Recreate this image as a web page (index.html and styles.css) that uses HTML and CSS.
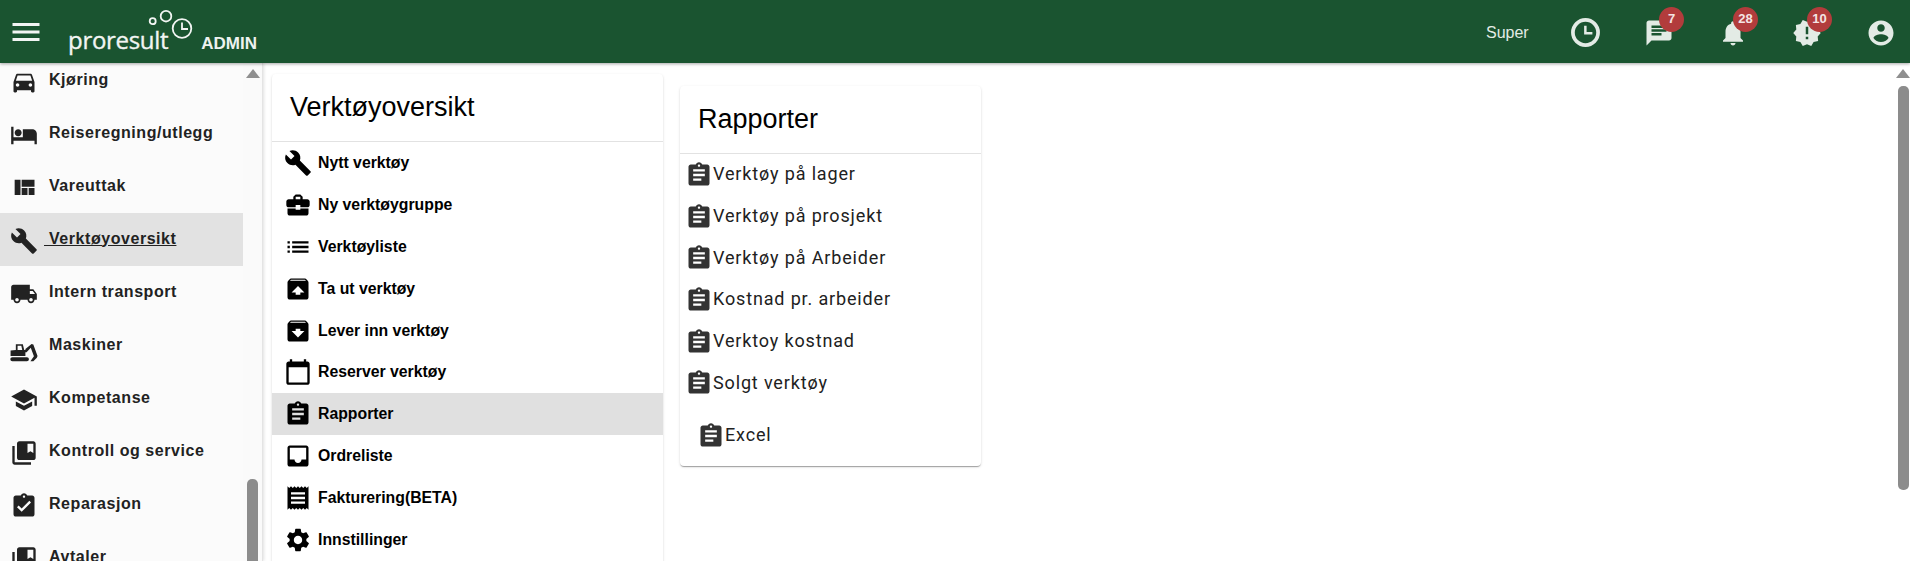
FILE: index.html
```html
<!DOCTYPE html>
<html lang="no">
<head>
<meta charset="utf-8">
<title>Verktøyoversikt</title>
<link rel="stylesheet" href="styles.css">
</head>
<body>
<svg class="sprite" xmlns="http://www.w3.org/2000/svg">
<symbol id="i-car" viewBox="0 0 24 24"><path d="M18.92 6.01C18.72 5.42 18.16 5 17.5 5h-11c-.66 0-1.21.42-1.42 1.01L3 12v8c0 .55.45 1 1 1h1c.55 0 1-.45 1-1v-1h12v1c0 .55.45 1 1 1h1c.55 0 1-.45 1-1v-8l-2.08-5.99zM6.5 16c-.83 0-1.5-.67-1.5-1.5S5.67 13 6.5 13s1.5.67 1.5 1.5S7.33 16 6.5 16zm11 0c-.83 0-1.5-.67-1.5-1.5s.67-1.5 1.5-1.5 1.5.67 1.5 1.5-.67 1.5-1.5 1.5zM5 11l1.5-4.5h11L19 11H5z"/></symbol>
<symbol id="i-hotel" viewBox="0 0 24 24"><path d="M7 13c1.66 0 3-1.34 3-3S8.66 7 7 7s-3 1.34-3 3 1.34 3 3 3zm12-6h-8v7H3V5H1v15h2v-3h18v3h2v-9c0-2.21-1.79-4-4-4z"/></symbol>
<symbol id="i-quilt" viewBox="0 0 24 24"><path d="M10 18h5v-6h-5v6zm-6 0h5V5H4v13zm12 0h5v-6h-5v6zM10 5v6h11V5H10z"/></symbol>
<symbol id="i-build" viewBox="0 0 24 24"><path d="M22.7 19l-9.1-9.1c.9-2.3.4-5-1.5-6.9-2-2-5-2.4-7.4-1.3L9 6 6 9 1.6 4.7C.4 7.1.9 10.1 2.9 12.1c1.9 1.9 4.6 2.4 6.9 1.5l9.1 9.1c.4.4 1 .4 1.4 0l2.3-2.3c.5-.4.5-1.1.1-1.4z"/></symbol>
<symbol id="i-truck" viewBox="0 0 24 24"><path d="M20 8h-3V4H3c-1.1 0-2 .9-2 2v11h2c0 1.66 1.34 3 3 3s3-1.34 3-3h6c0 1.66 1.34 3 3 3s3-1.34 3-3h2v-5l-3-4zM6 18.5c-.83 0-1.5-.67-1.5-1.5s.67-1.5 1.5-1.5 1.5.67 1.5 1.5-.67 1.5-1.5 1.5zm13.5-9l1.96 2.5H17V9.5h2.5zm-1.5 9c-.83 0-1.5-.67-1.5-1.5s.67-1.500 1.5-1.5 1.5.67 1.5 1.5-.67 1.5-1.5 1.5z"/></symbol>
<symbol id="i-digger" viewBox="0 0 24 24"><path fill-rule="evenodd" d="M2 15.600h12.500c1 0 1.700.8 1.700 1.700s-.7 1.700-1.700 1.700H2c-1 0-1.700-.8-1.700-1.700s.7-1.700 1.700-1.700zM5 4.400h6l1.200 5h1v5.200H.5V9.800L5 9.400v-5zm1.500 1.400v3.600h4l-.8-3.600H6.500zM13.200 8.500 18.500 4.300l1.500.4 3.600 9.800-.6 1.600-3 2.900h-2.500l3-4.200-2.700-7.200-3.600 3.800h-1z"/></symbol>
<symbol id="i-school" viewBox="0 0 24 24"><path d="M5 13.180v4L12 21l7-3.820v-4L12 17l-7-3.820zM12 3 1 9l11 6 9-4.910V17h2V9L12 3z"/></symbol>
<symbol id="i-books" viewBox="0 0 24 24"><path d="M4 6H2v14c0 1.100.9 2 2 2h14v-2H4V6zm16-4H8c-1.100 0-2 .9-2 2v12c0 1.100.9 2 2 2h12c1.100 0 2-.9 2-2V4c0-1.100-.9-2-2-2zm0 10-2.500-1.500L15 12V4h5v8z"/></symbol>
<symbol id="i-turned" viewBox="0 0 24 24"><path d="M19 3h-4.180C14.400 1.840 13.300 1 12 1c-1.300 0-2.400.84-2.820 2H5c-1.100 0-2 .9-2 2v14c0 1.100.9 2 2 2h14c1.100 0 2-.9 2-2V5c0-1.100-.9-2-2-2zm-7 0c.55 0 1 .45 1 1s-.45 1-1 1-1-.45-1-1 .45-1 1-1zm-2 14-4-4 1.410-1.410L10 14.170l6.590-6.590L18 9l-8 8z"/></symbol>
<symbol id="i-assign" viewBox="0 0 24 24"><path d="M19 3h-4.180C14.400 1.840 13.300 1 12 1c-1.300 0-2.400.84-2.820 2H5c-1.100 0-2 .9-2 2v14c0 1.100.9 2 2 2h14c1.100 0 2-.9 2-2V5c0-1.100-.9-2-2-2zm-7 0c.55 0 1 .45 1 1s-.45 1-1 1-1-.45-1-1 .45-1 1-1zm2 14H7v-2h7v2zm3-4H7v-2h10v2zm0-4H7V7h10v2z"/></symbol>
<symbol id="i-case" viewBox="0 0 24 24"><path d="M10 16v-1H3.010L3 19c0 1.110.89 2 2 2h14c1.110 0 2-.89 2-2v-4h-7v1h-4zm10-9h-4.010V5l-2-2h-4l-2 2v2H4c-1.100 0-2 .9-2 2v3c0 1.110.89 2 2 2h6v-2h4v2h6c1.100 0 2-.9 2-2V9c0-1.100-.9-2-2-2zm-6 0h-4V5h4v2z"/></symbol>
<symbol id="i-list" viewBox="0 0 24 24"><path d="M3 13h2v-2H3v2zm0 4h2v-2H3v2zm0-8h2V7H3v2zm4 4h14v-2H7v2zm0 4h14v-2H7v2zM7 7v2h14V7H7z"/></symbol>
<symbol id="i-unarchive" viewBox="0 0 24 24"><path d="M20.550 5.220l-1.390-1.680C18.880 3.210 18.470 3 18 3H6c-.47 0-.88.21-1.150.55L3.460 5.220C3.170 5.570 3 6.010 3 6.500V19c0 1.100.89 2 2 2h14c1.100 0 2-.9 2-2V6.500c0-.49-.17-.93-.45-1.280zM12 9.500l5.500 5.500H14v2h-4v-2H6.500L12 9.500zM5.120 5l.82-1h12l.93 1H5.120z"/></symbol>
<symbol id="i-archive" viewBox="0 0 24 24"><path d="M20.540 5.230l-1.390-1.680C18.880 3.210 18.470 3 18 3H6c-.47 0-.88.21-1.160.55L3.460 5.230C3.170 5.570 3 6.020 3 6.500V19c0 1.100.9 2 2 2h14c1.100 0 2-.9 2-2V6.500c0-.48-.17-.93-.46-1.270zM12 17.500 6.500 12H10v-2h4v2h3.500L12 17.500zM5.120 5l.81-1h12l.94 1H5.120z"/></symbol>
<symbol id="i-cal" viewBox="0 0 24 24"><path d="M20 3h-1V1h-2v2H7V1H5v2H4c-1.100 0-2 .9-2 2v16c0 1.100.9 2 2 2h16c1.100 0 2-.9 2-2V5c0-1.100-.9-2-2-2zm0 18H4V8h16v13z"/></symbol>
<symbol id="i-inbox" viewBox="0 0 24 24"><path d="M19 3H4.990c-1.110 0-1.980.89-1.980 2L3 19c0 1.100.88 2 1.990 2H19c1.100 0 2-.9 2-2V5c0-1.110-.9-2-2-2zm0 12h-4c0 1.660-1.350 3-3 3s-3-1.340-3-3H4.990V5H19v10z"/></symbol>
<symbol id="i-receipt" viewBox="0 0 24 24"><path d="M18 17H6v-2h12v2zm0-4H6v-2h12v2zm0-4H6V7h12v2zM3 22l1.500-1.500L6 22l1.500-1.500L9 22l1.500-1.500L12 22l1.500-1.500L15 22l1.500-1.500L18 22l1.500-1.500L21 22V2l-1.500 1.500L18 2l-1.500 1.500L15 2l-1.500 1.500L12 2l-1.500 1.500L9 2 7.500 3.500 6 2 4.500 3.500 3 2v20z"/></symbol>
<symbol id="i-gear" viewBox="0 0 24 24"><path d="M19.140 12.940c.04-.3.06-.61.06-.94 0-.32-.02-.64-.07-.94l2.030-1.580c.18-.14.23-.41.12-.61l-1.920-3.320c-.12-.22-.37-.29-.59-.22l-2.390.96c-.5-.38-1.030-.7-1.620-.94l-.36-2.540c-.04-.24-.24-.41-.48-.41h-3.840c-.24 0-.43.17-.47.41l-.36 2.540c-.59.24-1.130.57-1.620.94l-2.390-.96c-.22-.08-.47 0-.59.22L2.740 8.870c-.12.21-.08.47.12.61l2.030 1.580c-.05.3-.09.63-.09.94s.02.64.07.94l-2.030 1.580c-.18.14-.23.41-.12.61l1.920 3.320c.12.22.37.29.59.22l2.390-.96c.5.38 1.030.7 1.620.94l.36 2.540c.05.24.24.41.48.41h3.840c.24 0 .44-.17.47-.41l.36-2.540c.59-.24 1.130-.56 1.620-.94l2.390.96c.22.08.47 0 .59-.22l1.920-3.320c.12-.22.07-.47-.12-.61l-2.010-1.580zM12 15.600c-1.980 0-3.600-1.620-3.600-3.600s1.620-3.600 3.600-3.600 3.600 1.620 3.600 3.600-1.620 3.600-3.600 3.600z"/></symbol>
<symbol id="i-menu" viewBox="0 0 24 24"><path d="M3 18h18v-2H3v2zm0-5h18v-2H3v2zm0-7v2h18V6H3z"/></symbol>
<symbol id="i-clock" viewBox="0 0 24 24"><path fill-rule="evenodd" d="M12 1.500a10.500 10.500 0 1 0 0 21 10.500 10.500 0 0 0 0-21zm0 18.300a7.800 7.800 0 1 1 0-15.600 7.800 7.800 0 0 1 0 15.600zM11 7h1.800v4.700H17v1.800h-6V7z"/></symbol>
<symbol id="i-chat" viewBox="0 0 24 24"><path d="M20 2H4c-1.100 0-1.990.9-1.990 2L2 22l4-4h14c1.100 0 2-.9 2-2V4c0-1.100-.9-2-2-2zM6 9h12v2H6V9zm8 5H6v-2h8v2zm4-6H6V6h12v2z"/></symbol>
<symbol id="i-bell" viewBox="0 0 24 24"><path d="M12 22c1.100 0 2-.9 2-2h-4c0 1.100.89 2 2 2zm6-6v-5c0-3.070-1.640-5.640-4.500-6.320V4c0-.83-.67-1.500-1.500-1.500s-1.500.67-1.500 1.500v.68C7.630 5.360 6 7.920 6 11v5l-2 2v1h16v-1l-2-2z"/></symbol>
<symbol id="i-release" viewBox="0 0 24 24"><path d="M23 12l-2.440-2.780.34-3.680-3.610-.82-1.890-3.180L12 3 8.600 1.540 6.710 4.720l-3.610.81.34 3.680L1 12l2.440 2.780-.34 3.690 3.610.82 1.890 3.180L12 21l3.400 1.460 1.890-3.180 3.610-.82-.34-3.680L23 12zm-10 5h-2v-2h2v2zm0-4h-2V7h2v6z"/></symbol>
<symbol id="i-account" viewBox="0 0 24 24"><path d="M12 2C6.480 2 2 6.480 2 12s4.480 10 10 10 10-4.480 10-10S17.520 2 12 2zm0 3c1.660 0 3 1.340 3 3s-1.340 3-3 3-3-1.340-3-3 1.340-3 3-3zm0 14.200c-2.500 0-4.710-1.280-6-3.220.03-1.990 4-3.080 6-3.080 1.990 0 5.970 1.090 6 3.080-1.290 1.940-3.500 3.220-6 3.220z"/></symbol>
</svg>

<div class="page">
  <header class="topbar">
    <svg class="menu-icon"><use href="#i-menu"/></svg>
    <div class="brand">
      <span class="brand-name">proresult</span>
      <svg class="brand-mark" viewBox="0 0 48 36">
        <circle class="mark-line" cx="5.700" cy="17.200" r="3"/>
        <circle class="mark-line" cx="19" cy="12.200" r="5.300"/>
        <circle class="mark-line" cx="35" cy="24.500" r="9.300"/>
        <path class="mark-line" d="M35 18.500v6.500h6"/>
      </svg>
      <span class="brand-admin">ADMIN</span>
    </div>
    <div class="top-actions">
      <span class="user-name">Super</span>
      <span class="top-btn"><svg class="top-icon top-icon-clock"><use href="#i-clock"/></svg></span>
      <span class="top-btn"><svg class="top-icon"><use href="#i-chat"/></svg><span class="badge">7</span></span>
      <span class="top-btn"><svg class="top-icon"><use href="#i-bell"/></svg><span class="badge">28</span></span>
      <span class="top-btn"><svg class="top-icon"><use href="#i-release"/></svg><span class="badge">10</span></span>
      <span class="top-btn"><svg class="top-icon"><use href="#i-account"/></svg></span>
    </div>
  </header>

  <div class="workspace">
    <aside class="sidebar">
      <nav class="side-list">
        <a class="side-item"><svg class="side-icon"><use href="#i-car"/></svg><span>Kjøring</span></a>
        <a class="side-item"><svg class="side-icon"><use href="#i-hotel"/></svg><span>Reiseregning/utlegg</span></a>
        <a class="side-item"><svg class="side-icon"><use href="#i-quilt"/></svg><span>Vareuttak</span></a>
        <a class="side-item side-item-active"><svg class="side-icon"><use href="#i-build"/></svg><span class="side-active-label">&nbsp;Verktøyoversikt</span></a>
        <a class="side-item"><svg class="side-icon"><use href="#i-truck"/></svg><span>Intern transport</span></a>
        <a class="side-item"><svg class="side-icon side-icon-low"><use href="#i-digger"/></svg><span>Maskiner</span></a>
        <a class="side-item"><svg class="side-icon"><use href="#i-school"/></svg><span>Kompetanse</span></a>
        <a class="side-item"><svg class="side-icon"><use href="#i-books"/></svg><span>Kontroll og service</span></a>
        <a class="side-item"><svg class="side-icon"><use href="#i-turned"/></svg><span>Reparasjon</span></a>
        <a class="side-item"><svg class="side-icon"><use href="#i-books"/></svg><span>Avtaler</span></a>
      </nav>
      <div class="side-track">
        <span class="arrow-up"></span>
        <span class="side-thumb"></span>
      </div>
    </aside>

    <main class="content">
      <section class="card card-tools">
        <h2 class="card-title">Verktøyoversikt</h2>
        <ul class="tool-list">
          <li class="tool-item"><svg class="tool-icon"><use href="#i-build"/></svg>Nytt verktøy</li>
          <li class="tool-item"><svg class="tool-icon"><use href="#i-case"/></svg>Ny verktøygruppe</li>
          <li class="tool-item"><svg class="tool-icon"><use href="#i-list"/></svg>Verktøyliste</li>
          <li class="tool-item"><svg class="tool-icon"><use href="#i-unarchive"/></svg>Ta ut verktøy</li>
          <li class="tool-item"><svg class="tool-icon"><use href="#i-archive"/></svg>Lever inn verktøy</li>
          <li class="tool-item"><svg class="tool-icon"><use href="#i-cal"/></svg>Reserver verktøy</li>
          <li class="tool-item tool-item-active"><svg class="tool-icon"><use href="#i-assign"/></svg>Rapporter</li>
          <li class="tool-item"><svg class="tool-icon"><use href="#i-inbox"/></svg>Ordreliste</li>
          <li class="tool-item"><svg class="tool-icon"><use href="#i-receipt"/></svg>Fakturering(BETA)</li>
          <li class="tool-item"><svg class="tool-icon"><use href="#i-gear"/></svg>Innstillinger</li>
        </ul>
      </section>

      <section class="card card-reports">
        <h2 class="card-title">Rapporter</h2>
        <ul class="report-list">
          <li class="report-item"><svg class="report-icon"><use href="#i-assign"/></svg>Verktøy på lager</li>
          <li class="report-item"><svg class="report-icon"><use href="#i-assign"/></svg>Verktøy på prosjekt</li>
          <li class="report-item"><svg class="report-icon"><use href="#i-assign"/></svg>Verktøy på Arbeider</li>
          <li class="report-item"><svg class="report-icon"><use href="#i-assign"/></svg>Kostnad pr. arbeider</li>
          <li class="report-item"><svg class="report-icon"><use href="#i-assign"/></svg>Verktoy kostnad</li>
          <li class="report-item"><svg class="report-icon"><use href="#i-assign"/></svg>Solgt verktøy</li>
          <li class="report-item report-excel"><svg class="report-icon"><use href="#i-assign"/></svg>Excel</li>
        </ul>
      </section>
    </main>

    <div class="page-track">
      <span class="arrow-up"></span>
      <span class="page-thumb"></span>
    </div>
  </div>
</div>
</body>
</html>
```

FILE: styles.css
```css
* { box-sizing: border-box; }

html, body { margin: 0; height: 100%; overflow: hidden; }

body {
  background: #fff;
  font-family: "Liberation Sans", Arial, sans-serif;
  color: #000;
}

.sprite { display: none; }

.page {
  display: flex;
  flex-direction: column;
  height: 561px;
  overflow: hidden;
}

/* top bar */
.topbar {
  position: relative;
  z-index: 3;
  flex: 0 0 63px;
  display: flex;
  align-items: center;
  background: #1a5430;
  box-shadow: 0 1px 3px rgba(0, 0, 0, .35);
  color: #e3ebe5;
}

.menu-icon {
  width: 36px;
  height: 36px;
  margin-left: 8px;
  fill: #f2f5f3;
}

.brand {
  position: relative;
  display: flex;
  align-items: baseline;
  margin-left: 24px;
  padding-top: 15px;
}

.brand-name {
  font-family: "Open Sans", sans-serif;
  font-size: 24px;
  font-weight: 400;
  letter-spacing: -.3px;
  color: #f2f5f3;
  -webkit-text-stroke: .35px #f2f5f3;
}

.brand-admin {
  margin-left: 33px;
  font-size: 17px;
  font-weight: 700;
  color: #eef2ef;
}

.brand-mark {
  position: absolute;
  left: 79px;
  top: -4px;
  width: 48px;
  height: 36px;
}

.mark-line {
  fill: none;
  stroke: #f2f5f3;
  stroke-width: 1.800;
}

.top-actions {
  display: flex;
  align-items: center;
  margin-left: auto;
  margin-right: -8px;
  margin-top: 2px;
}

.user-name {
  width: 41px;
  font-size: 16px;
  margin-right: 21px;
}

.top-btn {
  position: relative;
  display: flex;
  justify-content: center;
  align-items: center;
  width: 74px;
  height: 40px;
}

.top-icon {
  width: 30px;
  height: 30px;
  fill: #e3ebe5;
}

.top-icon-clock {
  width: 33px;
  height: 33px;
}

.badge {
  position: absolute;
  left: 37px;
  top: -6px;
  width: 25px;
  height: 25px;
  border-radius: 50%;
  background: #b23c3c;
  color: #f4e4e4;
  font-size: 13px;
  font-weight: 700;
  line-height: 24px;
  text-align: center;
}

/* workspace */
.workspace {
  flex: 1;
  display: flex;
  min-height: 0;
}

.sidebar {
  position: relative;
  z-index: 2;
  flex: 0 0 263px;
  display: flex;
  overflow: hidden;
  background: #fbfbfb;
  border-right: 1px solid #e4e4e4;
  box-shadow: 1px 0 3px rgba(0, 0, 0, .12);
}

.side-list {
  flex: 0 0 243px;
  margin-top: -9px;
}

.side-item {
  display: flex;
  align-items: center;
  height: 53px;
  padding: 0 0 2px 10px;
  font-size: 16px;
  font-weight: 700;
  letter-spacing: .55px;
  color: #222;
}

.side-icon {
  flex: none;
  width: 28px;
  height: 28px;
  margin-top: 4px;
  margin-right: 11px;
  fill: #222;
}

.side-icon-low { margin-top: 16px; }

.side-item-active { background: #e2e2e2; }

.side-active-label {
  margin-left: -5px;
  text-decoration: underline;
}

.side-track {
  flex: 0 0 19px;
  display: flex;
  flex-direction: column;
  align-items: center;
  background: #fafafa;
  padding-top: 6px;
}

.arrow-up {
  flex: none;
  width: 0;
  height: 0;
  border-left: 7px solid transparent;
  border-right: 7px solid transparent;
  border-bottom: 9px solid #8f8f8f;
}

.side-thumb {
  width: 11px;
  height: 90px;
  margin-top: auto;
  margin-bottom: -8px;
  border-radius: 5px 5px 0 0;
  background: #8c8c8c;
}

.content {
  flex: 1;
  display: flex;
  align-items: flex-start;
  gap: 17px;
  min-width: 0;
  padding: 11px 0 0 9px;
}

.card {
  flex: none;
  background: #fff;
  border-radius: 4px;
  box-shadow: 0 2px 1px -1px rgba(0, 0, 0, .2), 0 1px 1px rgba(0, 0, 0, .14), 0 1px 3px rgba(0, 0, 0, .12);
}

.card-tools {
  width: 391px;
  padding-bottom: 24px;
}

.card-reports {
  width: 301px;
  margin-top: 12px;
  height: 380px;
}

.card-title {
  height: 68px;
  margin: 0;
  padding: 0 18px;
  border-bottom: 1px solid #e2e2e2;
  font-size: 27px;
  font-weight: 400;
  line-height: 66px;
  color: #000;
}

.tool-list,
.report-list {
  margin: 0;
  padding: 0;
  list-style: none;
}

.tool-item {
  display: flex;
  align-items: center;
  height: 41.900px;
  padding-left: 12px;
  font-size: 15.800px;
  font-weight: 700;
  color: #000;
}

.tool-icon {
  flex: none;
  width: 28px;
  height: 28px;
  margin-right: 6px;
  fill: #000;
}

.tool-item-active { background: #e0e0e0; }

.report-item {
  display: flex;
  align-items: center;
  height: 41.700px;
  padding: 0 0 2px 5px;
  font-family: Roboto, sans-serif;
  font-size: 18px;
  letter-spacing: .85px;
  color: #212121;
}

.report-icon {
  flex: none;
  width: 28px;
  height: 28px;
  margin-top: 2px;
  fill: #333;
}

.report-excel {
  margin-top: 11px;
  padding-left: 17px;
}

.page-track {
  flex: 0 0 13px;
  display: flex;
  flex-direction: column;
  align-items: center;
  background: #fff;
  padding-top: 6px;
}

.page-thumb {
  width: 11px;
  height: 404px;
  margin-top: 8px;
  border-radius: 5px;
  background: #8c8c8c;
}
```
